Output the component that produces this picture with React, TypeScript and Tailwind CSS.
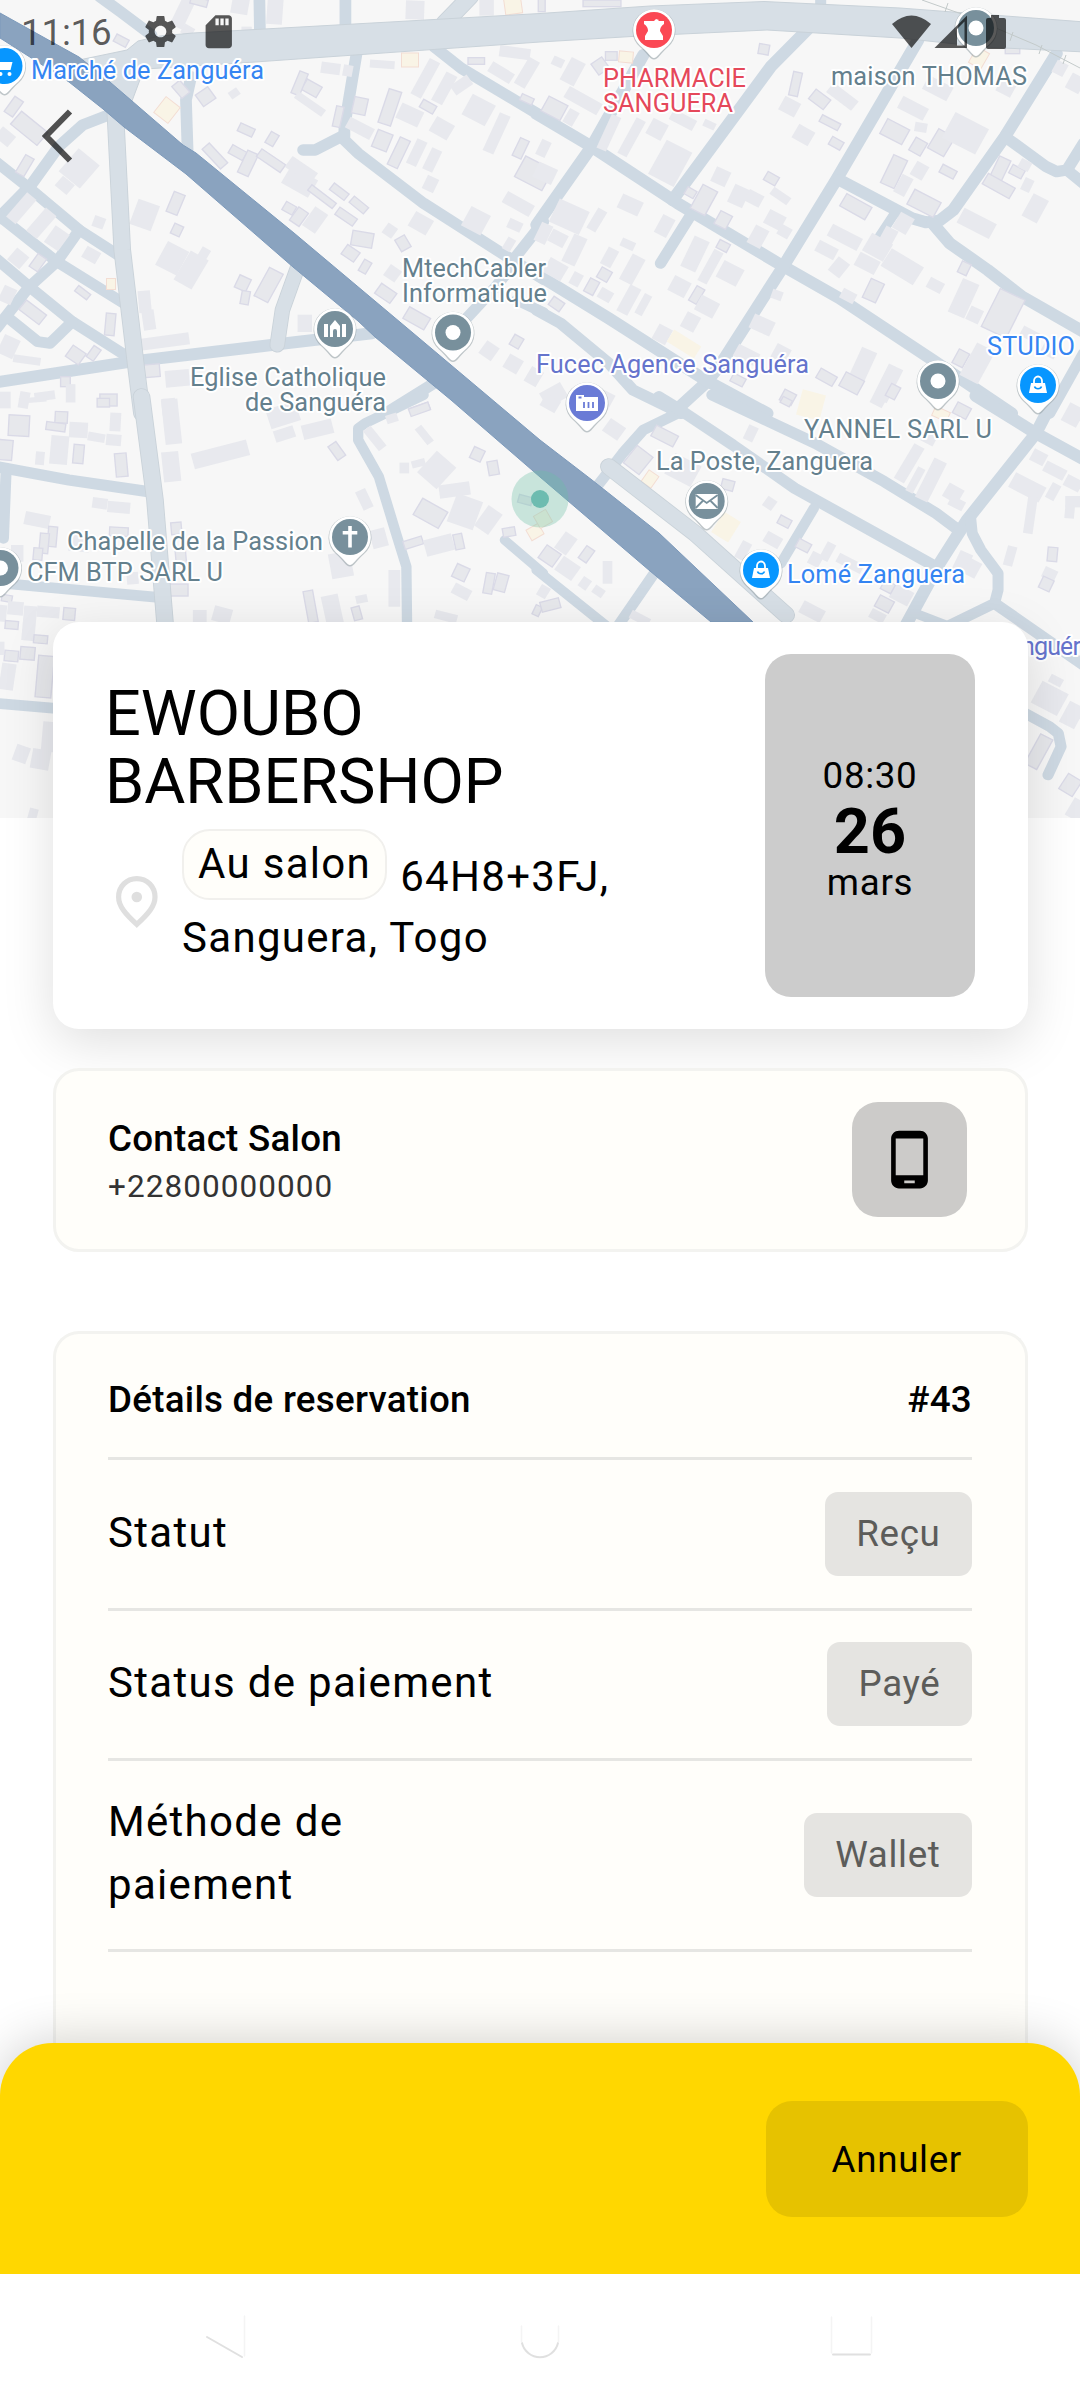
import React from 'react';
import { MdPhoneAndroid, MdSdCard, MdSettings } from 'react-icons/md';

type Road = [points: string, width?: number, major?: boolean];
/** centre x, centre y, width, height, rotation, outlined */
type Building = [number, number, number, number, number, number?];

interface Tile {
  transform: string;
  roads: Road[];
  buildings: Building[];
}

/* The map is cut in four tiles, each with its own local grid. */
const TILES: Tile[] = [
  {
    transform: 'scale(0.34439 0.33333)',
    roads: [
      ['290,-10 350,35 440,105', 32],
      ['753,-10 755,110', 32],
      ['1003,-10 1003,90', 32],
      ['1365,-10 1290,70', 46, true],
      ['555,230 540,300 545,460', 32],
      ['1037,150 1000,380 1000,420 1040,460 1230,610 1480,775 1578,838', 32],
      ['1000,405 915,450 880,450', 32],
      ['1260,140 1340,205 1578,352', 32],
      ['1578,665 1490,780'],
      ['335,340 355,750 395,1100 412,1240', 46, true],
      ['315,345 240,375 170,440 90,555 -10,660', 32],
      ['-10,487 80,560 230,690 350,770'],
      ['-10,642 165,785 360,910'],
      ['-10,777 85,860 210,965 370,1070'],
      ['230,690 165,785 85,860 -10,985'],
      ['20,950 110,1025 145,1030 210,965'],
      ['-10,1147 380,1085 830,1030 1080,1000', 34],
      ['865,800 820,930 805,1035', 40, true],
      ['1260,1150 1120,1240', 32],
      ['1350,960 1440,860 1500,780'],
      ['1500,900 1578,938', 30],
    ],
    buildings: [
      [40, 320, 30, 55, 35, 1], [85, 385, 100, 50, 40, 1], [15, 410, 50, 40, 40], [230, 505, 80, 90, 40], [72, 497, 28, 60, 30, 1],
      [188, 556, 45, 38, 40], [62, 625, 36, 95, 40], [120, 670, 40, 90, 40], [165, 715, 50, 60, 35], [287, 667, 34, 34, 20],
      [53, 775, 46, 46, 40], [110, 788, 30, 46, 35, 1], [265, 765, 46, 38, 30], [240, 878, 44, 20, 38, 1], [22, 885, 40, 50, 25],
      [95, 937, 74, 36, 38, 1], [320, 973, 28, 66, 5, 1], [420, 905, 36, 66, -5], [432, 960, 36, 60, -8], [475, 1025, 150, 36, -8],
      [25, 1040, 50, 60, 25], [78, 1080, 80, 24, 8], [220, 1065, 46, 40, 35, 1], [272, 1060, 25, 40, 35, 1], [440, 1112, 48, 38, -5, 1],
      [515, 1135, 70, 50, -5], [190, 1145, 28, 30, 0, 1], [205, 1180, 28, 55, 0], [130, 1188, 60, 26, -8], [315, 1200, 50, 36, 0, 1],
      [15, 1200, 32, 50, 0], [70, 1200, 30, 50, 10], [490, 1220, 40, 50, -5], [420, 645, 66, 80, 20], [510, 610, 34, 64, 22, 1],
      [514, 690, 28, 32, 25, 1], [500, 775, 70, 80, 28], [555, 810, 60, 100, 30], [590, 765, 28, 44, 30], [705, 850, 36, 40, 25, 1],
      [712, 893, 24, 40, 10, 1], [780, 855, 45, 96, 28, 1], [885, 970, 42, 52, 0], [715, 390, 46, 26, 25, 1], [790, 417, 26, 38, 30, 1],
      [624, 468, 28, 80, -42, 1], [690, 458, 48, 28, 30, 1], [720, 490, 34, 72, 25, 1], [787, 482, 84, 28, 35, 1], [870, 545, 90, 60, 30],
      [875, 510, 90, 40, 35], [935, 590, 90, 20, 38, 1], [985, 575, 54, 24, 38, 1], [1042, 615, 54, 24, 40, 1], [840, 625, 34, 28, 30, 1],
      [868, 650, 34, 48, 35, 1], [915, 660, 46, 68, 35], [1005, 650, 62, 26, 35, 1], [1052, 718, 62, 44, 10, 1], [1018, 760, 44, 34, 35, 1],
      [1060, 800, 24, 38, 30, 1], [1132, 692, 34, 36, 35], [1170, 730, 32, 40, -30, 1], [1222, 670, 60, 50, 30], [1140, 820, 40, 40, 35],
      [1120, 880, 54, 36, 35, 1], [1210, 955, 70, 40, 30, 1], [1382, 662, 64, 66, 28], [1505, 612, 90, 38, 30], [1495, 676, 42, 30, 25],
      [1478, 733, 26, 40, 30], [1390, 330, 76, 70, 28], [1283, 385, 60, 50, 30], [1132, 322, 38, 106, 18, 1], [1190, 345, 70, 50, 25],
      [1243, 320, 44, 26, 30, 1], [1235, 235, 34, 120, 28], [1290, 265, 36, 96, 28], [1340, 255, 60, 34, -35], [1045, 318, 40, 50, 12, 1],
      [982, 350, 22, 62, 12, 1], [1045, 385, 80, 36, 28], [1110, 422, 46, 54, 22, 1], [1158, 458, 32, 90, 25, 1], [1210, 458, 32, 80, 25],
      [1255, 480, 32, 70, 25], [1250, 552, 36, 44, 25], [1442, 400, 34, 124, 24], [1512, 445, 28, 58, 25, 1], [1550, 520, 90, 70, 28, 1],
      [1530, 298, 38, 20, 25, 1], [1110, 193, 72, 24, 4], [960, 205, 56, 34, 8], [1010, 212, 28, 34, 10], [1383, 183, 48, 20, 0, 1],
      [1455, 218, 74, 34, 32], [1530, 218, 36, 90, 30], [1495, 158, 90, 34, 8], [905, 265, 50, 36, 30, 1], [870, 250, 26, 70, 22, 1],
      [900, 312, 98, 24, 36], [680, 280, 30, 24, -35], [525, 268, 30, 46, -40, 1], [597, 290, 44, 42, -35, 1], [352, 122, 40, 24, 28, 1],
      [530, 40, 40, 90, 25], [578, 5, 50, 22, 15, 1], [698, 12, 50, 60, 10], [798, 35, 46, 76, 4], [1205, 30, 54, 56, 2], [1413, 22, 42, 50, 0],
      [716, 96, 30, 32, 0], [545, 92, 34, 30, 30], [1420, 1052, 44, 46, 35], [1500, 1025, 30, 34, 30, 1], [1490, 1092, 46, 46, 30],
      [1550, 1130, 40, 50, 30], [1220, 1225, 54, 20, -20, 1],
    ],
  },
  {
    transform: 'translate(540 0) scale(0.34439 0.33333)',
    roads: [
      ['815,-20 815,20', 30],
      ['785,80 670,200 385,600', 34],
      ['300,165 150,440 -10,675', 34],
      ['-10,342 150,440 400,610 700,795 870,895 1140,1080 1370,1240', 34],
      ['435,650 350,790'],
      ['1098,120 860,540 700,810 520,1100 480,1150 385,1240', 34],
      ['870,540 1080,655 1120,667 1160,662 1200,630 1350,410 1500,160', 34],
      ['1140,670 1190,730 1300,810 1400,890 1578,995', 34],
      ['1350,410 1470,500 1500,515 1530,510 1578,430', 32],
      ['1530,510 1578,550', 32],
      ['1030,640 985,710', 26],
      ['-10,822 200,955 480,1140 660,1240', 34],
      ['-10,930 60,970 200,1090 270,1170 410,1240', 32],
      ['1578,1060 1480,1240', 30],
    ],
    buildings: [
      [5, 15, 20, 40, 0, 1], [180, 10, 110, 20, 0, 1], [207, 168, 34, 26, 0, 1], [175, 198, 38, 40, -35, 1], [95, 215, 46, 76, 28],
      [52, 186, 34, 28, 25], [125, 302, 110, 38, 30], [42, 325, 62, 50, 28, 1], [90, 352, 32, 46, 30], [200, 398, 30, 110, 24],
      [266, 412, 30, 120, 28], [340, 388, 50, 52, 28], [415, 360, 76, 34, 28], [492, 374, 36, 22, 25], [378, 490, 84, 116, 28],
      [10, 445, 30, 50, 25], [15, 520, 60, 50, 25], [85, 650, 96, 76, 25], [165, 660, 30, 70, 30], [262, 615, 66, 46, 25],
      [362, 678, 40, 60, 28], [52, 715, 50, 40, 28], [100, 750, 42, 90, 25], [10, 700, 36, 60, 25], [202, 772, 34, 56, 28], [255, 733, 42, 26, 25],
      [268, 808, 42, 86, 28], [187, 824, 34, 34, 30, 1], [150, 860, 30, 44, 28, 1], [45, 808, 60, 50, 30], [105, 838, 30, 40, 28],
      [190, 885, 40, 34, 30], [258, 900, 36, 88, 28], [300, 914, 24, 66, 28], [48, 912, 38, 30, 35, 1], [405, 860, 54, 50, 28],
      [455, 885, 26, 50, 30, 1], [485, 920, 60, 50, 28], [437, 966, 44, 50, 28], [355, 1003, 44, 50, 28], [450, 762, 48, 100, 25],
      [495, 800, 30, 106, 28], [552, 820, 66, 56, 28], [532, 738, 34, 26, 28, 1], [532, 660, 38, 44, 28, 1], [476, 600, 48, 80, 28, 1],
      [437, 578, 24, 30, -60, 1], [525, 530, 46, 48, 25], [577, 588, 48, 58, 25], [622, 595, 48, 38, 28], [698, 588, 60, 26, 35],
      [672, 536, 38, 28, 30, 1], [633, 710, 44, 60, 28], [682, 660, 54, 46, 28], [710, 695, 36, 34, 30], [650, 148, 30, 30, 10, 1],
      [742, 252, 26, 72, 12, 1], [725, 320, 52, 46, 28], [812, 298, 54, 36, 38, 1], [878, 290, 92, 36, 38], [842, 368, 60, 22, 28, 1],
      [765, 405, 54, 46, 30], [860, 430, 38, 26, 30, 1], [1030, 395, 72, 50, 28, 1], [1083, 325, 84, 40, 28], [1106, 382, 36, 28, 10],
      [1098, 440, 38, 44, 30, 1], [1165, 428, 54, 66, 30, 1], [1235, 400, 110, 86, 28], [1028, 515, 44, 92, 25, 1], [1102, 512, 40, 46, 30],
      [1055, 556, 36, 60, 28], [1185, 515, 46, 26, 28, 1], [1115, 610, 86, 50, 28, 1], [917, 620, 84, 42, 30, 1], [885, 712, 98, 40, 28],
      [1055, 670, 46, 54, 30], [1012, 708, 40, 50, 28], [832, 750, 62, 36, 28], [868, 802, 42, 52, 38], [950, 790, 66, 44, 28],
      [980, 742, 70, 60, 30], [1052, 800, 110, 62, 32], [1148, 856, 46, 34, 28], [968, 872, 42, 62, 25, 1], [895, 888, 44, 32, 28],
      [688, 885, 32, 28, 20], [645, 975, 66, 46, 25], [1335, 510, 36, 76, 25, 1], [1332, 558, 90, 36, 30, 1], [1385, 515, 40, 28, 28, 1],
      [1408, 495, 34, 30, 28], [1415, 555, 28, 40, 25], [1438, 625, 50, 76, 28], [1268, 670, 106, 50, 28], [1232, 805, 28, 36, 25, 1],
      [1230, 895, 52, 110, 24], [1262, 945, 40, 44, 25], [1345, 940, 80, 126, 26, 1], [1222, 1075, 34, 46, 28, 1], [1270, 1090, 60, 110, 28],
      [1425, 1005, 60, 32, 28], [1480, 1050, 46, 40, 28], [935, 1100, 48, 110, 24], [905, 1150, 60, 46, 28, 1], [1010, 1150, 46, 110, 26],
      [1025, 1175, 30, 40, 28, 1], [832, 1132, 54, 32, 30, 1], [720, 1192, 38, 36, 28, 1], [600, 1065, 70, 40, 28], [575, 1140, 40, 26, 28, 1],
      [700, 1060, 46, 46, 28], [1155, 265, 80, 46, 28], [1355, 260, 48, 50, 28], [1372, 150, 42, 22, 0, 1], [1510, 205, 36, 40, 28],
      [1555, 250, 44, 50, 28], [40, 1185, 70, 50, -30], [190, 1200, 40, 50, 28],
    ],
  },
  {
    transform: 'translate(0 400) scale(0.34439 0.33333)',
    roads: [
      ['-10,200 200,240 430,275', 32],
      ['18,205 10,415', 30],
      ['411,-10 450,300 480,680', 46, true],
      ['30,552 460,592', 30],
      ['1230,-15 1060,70 1040,85 1040,120 1100,230 1150,400 1180,500 1182,680', 28],
      ['1465,420 1578,520', 26],
      ['-10,910 170,926', 30],
    ],
    buildings: [
      [95, 0, 80, 16, -5], [300, 8, 36, 26, 0, 1], [498, 65, 48, 135, -6], [497, 200, 50, 90, -6], [640, 163, 166, 48, -15],
      [822, 45, 90, 60, -18], [826, 102, 60, 36, -18], [922, 88, 90, 44, -14], [978, 153, 28, 50, -35, 1], [1088, 115, 28, 76, -38],
      [1138, 55, 34, 26, -18], [1218, 28, 60, 24, -20, 1], [1232, 105, 24, 60, -38], [1386, 163, 34, 36, 25, 1], [1432, 204, 30, 42, -10, 1],
      [1174, 204, 28, 32, 0], [1215, 190, 40, 22, -15], [1268, 210, 76, 86, 42], [1320, 270, 90, 40, -8], [1250, 340, 84, 56, 30, 1],
      [1350, 335, 80, 90, 20], [1418, 360, 50, 74, 35], [1058, 298, 32, 60, -25], [1100, 415, 46, 56, -15], [1200, 428, 56, 24, -18, 1],
      [1275, 435, 84, 50, -15], [1332, 425, 26, 46, -12, 1], [990, 495, 64, 76, -10], [1145, 565, 34, 110, 0], [1338, 518, 40, 42, 25, 1],
      [1340, 575, 54, 34, 28], [1420, 550, 26, 62, 10, 1], [1455, 548, 34, 52, 15, 1], [902, 620, 28, 96, -10, 1], [965, 630, 50, 90, -12],
      [1036, 640, 24, 40, -15, 1], [1050, 597, 34, 24, -12], [1295, 650, 66, 26, 15], [1560, 632, 20, 30, 25, 1], [1478, 396, 36, 26, -10, 1],
      [1525, 300, 40, 24, 15, 1], [55, 77, 60, 62, 3, 1], [178, 52, 36, 34, 3, 1], [162, 80, 56, 24, 8, 1], [228, 90, 54, 46, 3],
      [172, 150, 52, 86, 5], [228, 162, 30, 56, 5, 1], [335, 66, 32, 56, 3], [280, 112, 50, 26, 10], [330, 120, 44, 34, 5],
      [352, 195, 34, 70, -5, 1], [15, 150, 42, 60, 5, 1], [116, 175, 26, 40, 5], [290, 310, 44, 32, 8], [345, 322, 66, 34, 5],
      [108, 360, 74, 40, 12], [152, 410, 26, 60, 5, 1], [128, 430, 26, 60, 5, 1], [345, 395, 54, 26, 3, 1], [512, 385, 30, 36, -5, 1],
      [515, 570, 62, 36, 0, 1], [525, 470, 30, 50, -5, 1], [50, 460, 36, 50, 0], [230, 430, 60, 50, 5], [385, 535, 34, 36, -5],
      [20, 595, 30, 20, 10, 1], [45, 625, 46, 40, 5], [85, 670, 38, 104, 5], [140, 636, 66, 34, 5], [201, 642, 34, 36, 5, 1],
      [5, 640, 28, 50, 5], [34, 675, 38, 24, 5, 1], [118, 718, 40, 24, 5, 1], [80, 760, 42, 38, 5, 1], [33, 768, 40, 32, 5, 1],
      [130, 830, 46, 125, 5, 1], [22, 830, 42, 80, 8], [5, 745, 16, 40, 0], [62, 1062, 42, 50, 20], [118, 1078, 54, 60, 10],
      [140, 1010, 36, 90, 5], [95, 1245, 26, 40, 15], [580, 650, 40, 40, 0], [645, 645, 54, 46, 15], [110, 462, 26, 36, 5, 1],
    ],
  },
  {
    transform: 'translate(540 400) scale(0.34439 0.33333)',
    roads: [
      ['-10,510 195,680', 28],
      ['335,515 225,680', 30],
      ['400,40 300,90 240,160 165,260', 30],
      ['345,-10 400,25 560,135 740,265 1010,420 1140,495', 32],
      ['500,-15 800,130 1000,245 1150,340 1215,390', 32],
      ['1265,-12 1440,100 1578,178', 34],
      ['1495,-10 1440,100 1240,360 1160,490 1060,680', 34],
      ['1250,350 1255,400 1280,450 1330,520 1330,570 1320,610 1180,680', 30],
      ['1320,610 1578,795', 32],
      ['1090,640 1190,680', 26],
      ['795,325 700,490', 28],
      ['200,200 450,400 715,645', 46, true],
      ['1400,935 1480,980 1505,1000 1513,1040 1475,1125', 30],
    ],
    buildings: [
      [215, 88, 54, 46, 35], [362, 108, 72, 36, 28, 1], [285, 180, 58, 66, 38, 1], [415, 210, 86, 70, 28], [545, 255, 36, 30, 15, 1],
      [612, 100, 30, 46, 25], [667, 310, 32, 34, 35], [710, 365, 36, 26, 28, 1], [676, 420, 50, 36, 30], [765, 437, 40, 28, 28, 1],
      [590, 452, 30, 56, 28], [835, 455, 28, 56, 28], [800, 478, 36, 40, 28], [75, 430, 42, 60, 35], [135, 463, 28, 44, 35, 1],
      [28, 468, 50, 46, 35, 1], [80, 505, 60, 50, 35], [130, 550, 28, 34, 35], [170, 574, 34, 26, 35], [196, 517, 28, 68, 0],
      [30, 615, 56, 30, -15, 1], [10, 575, 30, 36, 30], [290, 655, 60, 26, 28], [790, 635, 70, 40, 28], [1000, 612, 46, 38, 28, 1],
      [980, 648, 46, 30, 28], [1072, 190, 34, 120, 30], [1135, 240, 40, 130, 26], [1090, 240, 24, 80, 28], [1200, 280, 50, 46, 30],
      [1210, 310, 46, 30, 28], [1225, 490, 40, 70, 25], [1255, 505, 40, 50, 28], [1448, 172, 44, 38, 28], [1495, 212, 66, 34, 28],
      [1548, 250, 50, 36, 28], [1415, 262, 100, 50, 28], [1424, 345, 28, 112, 8], [1490, 275, 28, 50, 28], [1550, 305, 50, 34, 0],
      [1538, 335, 28, 40, 5], [1365, 468, 28, 60, 15], [1488, 463, 28, 42, 5, 1], [1480, 522, 40, 34, 25], [1470, 552, 34, 36, 25, 1],
      [1225, 32, 44, 36, 28, 1], [1548, 45, 50, 60, 28], [1480, 895, 86, 74, 28], [1498, 842, 40, 26, 28], [1545, 945, 50, 70, 28],
      [1448, 1055, 40, 100, 28, 1], [1540, 1155, 46, 54, 32, 1], [1560, 1230, 50, 60, 30], [980, 5, 40, 24, 28], [715, 5, 30, 20, 28, 1],
      [1130, 115, 40, 34, 28], [30, 10, 50, 40, 30], [1050, 585, 60, 46, 28], [1010, 560, 34, 30, 28, 1], [900, 490, 80, 30, 28],
    ],
  },
];

/* Pale yellow plots, in map pixels. */
const PLOTS: [number, number, number, number, number][] = [
  [513, 5, 17, 18, -8], [410, 60, 17, 14, 0], [167, 110, 18, 20, 38], [111, 284, 9, 11, 0], [626, 57, 14, 11, 5],
  [684, 344, 32, 14, 32], [811, 405, 24, 26, 15], [979, 58, 14, 18, 30], [726, 527, 20, 24, 32], [650, 479, 12, 14, 35],
  [941, 414, 16, 10, 25], [535, 532, 14, 12, -30], [543, 519, 14, 14, -30],
];

type Glyph = 'dot' | 'cart' | 'bag' | 'bank' | 'mail' | 'cross' | 'church' | 'mortar';
const PINS: { x: number; y: number; color: string; glyph: Glyph }[] = [
  { x: 4.5, y: 66, color: '#0796ff', glyph: 'cart' },
  { x: 654, y: 30, color: '#fb4854', glyph: 'mortar' },
  { x: 976, y: 28, color: '#78909c', glyph: 'dot' },
  { x: 335, y: 329, color: '#78909c', glyph: 'church' },
  { x: 453, y: 332.5, color: '#78909c', glyph: 'dot' },
  { x: 587, y: 403, color: '#6a7bd6', glyph: 'bank' },
  { x: 938, y: 381, color: '#78909c', glyph: 'dot' },
  { x: 1038, y: 385, color: '#0796ff', glyph: 'bag' },
  { x: 706.7, y: 501, color: '#78909c', glyph: 'mail' },
  { x: 761, y: 570, color: '#0796ff', glyph: 'bag' },
  { x: 350, y: 537, color: '#78909c', glyph: 'cross' },
  { x: 0.5, y: 568, color: '#78909c', glyph: 'dot' },
];

const SLATE = '#64808d';
const BLUE = '#3585f2';
const LABELS: { x: number; y: number; w: number; t: string; color: string }[] = [
  { x: 31, y: 79, w: 233, t: 'Marché de Zanguéra', color: BLUE },
  { x: 603, y: 86.5, w: 143, t: 'PHARMACIE', color: '#e5485a' },
  { x: 603, y: 112, w: 130, t: 'SANGUERA', color: '#e5485a' },
  { x: 831, y: 84.5, w: 196, t: 'maison THOMAS', color: SLATE },
  { x: 402, y: 276.5, w: 144, t: 'MtechCabler', color: SLATE },
  { x: 402, y: 302, w: 145, t: 'Informatique', color: SLATE },
  { x: 190, y: 385.5, w: 196, t: 'Eglise Catholique', color: SLATE },
  { x: 245, y: 410.5, w: 141, t: 'de Sanguéra', color: SLATE },
  { x: 536, y: 372.5, w: 273, t: 'Fucec Agence Sanguéra', color: '#6574cc' },
  { x: 987, y: 354.5, w: 88, t: 'STUDIO', color: BLUE },
  { x: 804, y: 437.5, w: 188, t: 'YANNEL SARL U', color: SLATE },
  { x: 656, y: 470, w: 217, t: 'La Poste, Zanguera', color: SLATE },
  { x: 787, y: 582.5, w: 178, t: 'Lomé Zanguera', color: BLUE },
  { x: 67, y: 550, w: 256, t: 'Chapelle de la Passion', color: SLATE },
  { x: 27, y: 580.5, w: 196, t: 'CFM BTP SARL U', color: SLATE },
  { x: 1021, y: 655, w: 60, t: 'nguér', color: '#6574cc' },
];

function PinGlyph({ kind, color }: { kind: Glyph; color: string }) {
  switch (kind) {
    case 'dot':
      return <circle r="7.5" fill="#fff" />;
    case 'cart':
      return (
        <g fill="#fff">
          <path d="M-12 -7h4l1 3h15l-2 8h-12l-3 -9h-3z" />
          <circle cx="-4" cy="8" r="2" />
          <circle cx="5" cy="8" r="2" />
        </g>
      );
    case 'mortar':
      return <path fill="#fff" d="M-10 -9h10l2-2 3 1-1 1h6v3c-3 2-4 4-4 7l3 5v4h-18v-4l3-5c0-3-1-5-4-7z" />;
    case 'church':
      return (
        <g fill="#fff">
          <path d="M-11 -5h4v13h-4zM7 -5h4v13h-4z" />
          <path d="M-5 8v-11l5-6 5 6v11h-3v-6a2 2 0 0 0-4 0v6z" />
        </g>
      );
    case 'bank':
      return (
        <g>
          <path fill="#fff" d="M-11 -8h8v2h14v14h-22z" />
          <path stroke={color} strokeWidth="1.8" d="M-8.500 -5.500h3M-3 -1v6M1.500 -1v6M6 -1v6" />
        </g>
      );
    case 'mail':
      return (
        <g>
          <path fill="#fff" d="M-11 -7h22v15h-22z" />
          <path fill="none" stroke={color} strokeWidth="1.8" d="M-11 -6l11 8 11-8M-11 7l7-7M11 7l-7-7" />
        </g>
      );
    case 'cross':
      return <path fill="#fff" d="M-1.800 -11h3.600v5h5.500v3.500h-5.500v13h-3.600v-13h-5.500v-3.500h5.500z" />;
    case 'bag':
      return (
        <g>
          <path fill="#fff" d="M-7 -2h14l2 10h-18z" />
          <path fill="none" stroke="#fff" strokeWidth="1.800" d="M-4 -1v-3a4 4.500 0 0 1 8 0v3" />
          <path fill="none" stroke={color} strokeWidth="1.600" d="M-3.500 1.500c1 3 6 3 7 0" />
        </g>
      );
  }
}

function CityMap() {
  return (
    <svg className="absolute inset-0 h-full w-full" viewBox="0 0 1080 818" aria-hidden="true">
      <rect width="1080" height="818" fill="#f7f7f7" />
      {TILES.map((t) => (
        <g key={t.transform} transform={t.transform} fill="none" strokeLinecap="round" strokeLinejoin="round">
          {t.roads.filter((r) => !r[2]).map(([pts, w]) => (
            <polyline key={pts} points={pts} stroke="#ced9e3" strokeWidth={(w ?? 31) + 2} />
          ))}
        </g>
      ))}
      {TILES.map((t) => (
        <g key={t.transform} transform={t.transform}>
          {t.buildings.map(([x, y, w, h, a, o], i) => (
            <rect
              key={i}
              x={-w / 2}
              y={-h / 2}
              width={w}
              height={h}
              transform={`translate(${x} ${y}) rotate(${a})`}
              fill={o ? '#e7e8ec' : '#e8e9ee'}
              stroke={o ? '#dadae7' : 'none'}
              strokeWidth="4"
            />
          ))}
        </g>
      ))}
      {PLOTS.map(([x, y, w, h, a], i) => (
        <rect key={i} x={-w / 2} y={-h / 2} width={w} height={h} transform={`translate(${x} ${y}) rotate(${a})`} fill="#f9f4e6" stroke={w < 19 ? '#f3ddd3' : 'none'} strokeWidth="1" />
      ))}
      {TILES.map((t) => (
        <g key={t.transform} transform={t.transform} fill="none" strokeLinecap="round" strokeLinejoin="round">
          {t.roads.filter((r) => r[2]).map(([pts, w]) => (
            <React.Fragment key={pts}>
              <polyline points={pts} stroke="#c9d2d9" strokeWidth={(w ?? 40) + 5} />
              <polyline points={pts} stroke="#d7dfe6" strokeWidth={w} />
            </React.Fragment>
          ))}
        </g>
      ))}
      <path
        d="M79 60 127 50 138 41 160 36 193 33 390 22 540 13.500 650 6 764 1.500 900 8 1085 22V52L984 47 900 38 767 30 640 36 540 42 255 62 145 69 141 77 132 101Z"
        fill="#d7dfe6"
        stroke="#c9d2d9"
        strokeWidth="1"
      />
      <path d="M922 0 970 17 1036 45 1080 68M948 3l-3 9M1013 32l-3 9M1042 45l-3 9M1066 55l-3 9" fill="none" stroke="#c3caca" strokeWidth="1" />
      <path
        d="M0 13 79 57 103 76 132 101 183 145 196 153 294 233 413 333 540 440 592 480 659 533 753 622H711L650 571 540 477 451 400 375 337 358 321 293 267 186 174 124 127 103 109 69 82 0 38Z"
        fill="#8aa3bf"
        stroke="#7d9abb"
        strokeWidth="1"
      />
      <circle cx="540" cy="499" r="28.500" fill="#69bfa5" fillOpacity=".33" />
      <circle cx="540" cy="499" r="9" fill="#6dbcb0" />
      {PINS.map((p) => (
        <g key={`${p.x}`} transform={`translate(${p.x} ${p.y})`}>
          <path d="M0 29.500C-4 29.500 -7 23 -14 17A21.500 21.500 0 1 1 14 17C7 23 4 29.500 0 29.500Z" fill="#9aa5aa" fillOpacity=".6" />
          <path d="M0 28C-3 28 -6 22 -14 15.500A20.800 20.800 0 1 1 14 15.500C6 22 3 28 0 28Z" fill="#fff" />
          <circle r="18" fill={p.color} />
          <PinGlyph kind={p.glyph} color={p.color} />
        </g>
      ))}
      <g fontFamily="Roboto, sans-serif" fontSize="25.300" fontWeight="450" stroke="#fff" strokeWidth="4" strokeLinejoin="round" paintOrder="stroke">
        {LABELS.map((l) => (
          <text key={l.t} x={l.x} y={l.y} textLength={l.w} fill={l.color}>
            {l.t}
          </text>
        ))}
      </g>
    </svg>
  );
}

function StatusBar() {
  return (
    <div className="relative flex h-[63px] items-center justify-between pr-[73px] pl-[21px]">
      <div className="flex items-center">
        <span className="pt-[2px] text-[36.750px] leading-[63px] tracking-[-0.2px] text-black/65">11:16</span>
        <MdSettings className="ml-[29px] size-[39px] text-black/65" />
        <MdSdCard className="ml-[19.500px] size-[39.500px] text-black/65" />
      </div>
      <svg className="h-[34px] w-[115px]" viewBox="0 0 115 34" fill="#000" fillOpacity=".65">
        <path d="M0 9Q19.500 -8 39 9L19.500 33Z" />
        <path fillRule="evenodd" d="M42.500 33 75 .5V33ZM65 14V30.500H72.500V6.500Z" />
        <path d="M99 0h8v3h5q2 0 2 2v27q0 2-2 2h-16q-2 0-2-2V5q0-2 2-2h3z" />
      </svg>
    </div>
  );
}

function SalonCard() {
  return (
    <section className="relative flex h-[406.500px] justify-between rounded-[26px] bg-white px-[52.500px] py-[31.500px] shadow-[0_13px_52px_rgba(0,0,0,0.13)]">
      <div className="w-[560px] pt-[26px]">
        <h1 className="text-[63px] leading-[68px]">
          EWOUBO
          <br />
          BARBERSHOP
        </h1>
        <div className="mt-[13.500px] flex items-center">
          <svg className="mt-[5px] ml-[10.500px] h-[52px] w-[42px]" viewBox="0 0 42 52">
            <path
              d="M20.800 48.400C9 37.500 2.600 30 2.600 21C2.600 10.500 10.500 2.600 20.800 2.600S39 10.500 39 21C39 30 32.600 37.500 20.800 48.400Z"
              fill="none"
              stroke="#dfdfdf"
              strokeWidth="5.200"
            />
            <circle cx="20.800" cy="21" r="5.300" fill="#dfdfdf" />
          </svg>
          <div className="ml-[24.500px] text-[42px] tracking-[1.3125px]">
            <div className="flex items-start">
              <span className="rounded-[28px] border-[2.600px] border-[#f1f0ed] bg-[#fffefa] px-[14px] pt-[2px] pb-[3px] leading-[62px]">
                Au salon
              </span>
              <span className="ml-[13px] pt-[16px] leading-[63px]">64H8+3FJ,</span>
            </div>
            <p className="mt-[-2px] leading-[63px]">Sanguera, Togo</p>
          </div>
        </div>
      </div>
      <div className="flex w-[210px] flex-col items-center justify-center rounded-[26px] bg-[#ccc] pt-[4px]">
        <span className="text-[36.750px] leading-[52px] tracking-[0.656px]">08:30</span>
        <span className="text-[63px] leading-[60px] font-bold">26</span>
        <span className="text-[36.750px] leading-[42px] tracking-[0.656px]">mars</span>
      </div>
    </section>
  );
}

function ContactCard() {
  return (
    <section className="relative mt-[39px] flex h-[184px] items-center justify-between rounded-[26px] border-[3px] border-[#f3f3f0] bg-[#fffefa] pr-[57.500px] pl-[52.500px]">
      <div className="flex flex-col pt-[2px]">
        <span className="text-[36.750px] leading-[52.500px] font-medium tracking-[0.2625px]">Contact Salon</span>
        <span className="text-[31.500px] leading-[42px] tracking-[1.050px] text-[#333]">+22800000000</span>
      </div>
      <button className="flex size-[115.500px] items-center justify-center rounded-[26px] bg-[#cccbc9]">
        <MdPhoneAndroid className="size-[63px] text-black" />
      </button>
    </section>
  );
}

const ROWS = [
  { label: 'Statut', value: 'Reçu', box: 'h-[151px]' },
  { label: 'Status de paiement', value: 'Payé', box: 'h-[149.500px]' },
  { label: 'Méthode de paiement', value: 'Wallet', box: 'h-[191.500px]' },
];

function DetailsCard() {
  return (
    <section className="mt-[79px] flex-1 rounded-t-[26px] border-[3px] border-b-0 border-[#f3f3f0] bg-[#fffefa] px-[52.500px]">
      <header className="flex h-[126.500px] items-center justify-between border-b-[3px] border-[#e6e6e3] pt-[8px] text-[36.750px] font-medium tracking-[0.2625px]">
        <h2>Détails de reservation</h2>
        <span>#43</span>
      </header>
      {ROWS.map((r) => (
        <div key={r.label} className={`flex items-center justify-between border-b-[3px] border-[#e6e6e3] ${r.box}`}>
          <span className="max-w-[400px] pb-[3px] text-[42px] leading-[63px] tracking-[1.3125px]">{r.label}</span>
          <span className="rounded-[13px] bg-[#e5e4e1] px-[31.500px] text-[36.750px] leading-[84px] tracking-[0.656px] text-[#5c5c5a]">
            {r.value}
          </span>
        </div>
      ))}
    </section>
  );
}

function SystemNav() {
  return (
    <nav className="relative flex h-[126px] items-center bg-white pl-[204px]">
      <svg className="h-[54px] w-[680px]" viewBox="0 0 680 54" fill="none" strokeLinecap="round">
        <g stroke="#e0e0e0" strokeWidth="2">
          <path d="M3 27 38 47" />
          <path d="M318 33A18.500 18.500 0 0 0 354 33" />
          <path d="M629 44.500H666" />
        </g>
        <g stroke="#f4f4f4" strokeWidth="1.500">
          <path d="M40.500 6V46" />
          <path d="M317.500 16V32M354.500 16V32" />
          <path d="M627.500 7V43M667.500 7V43" />
        </g>
      </svg>
    </nav>
  );
}

export default function App() {
  return (
    <div className="flex h-[2400px] w-[1080px] flex-col overflow-hidden bg-white font-[Roboto,sans-serif] text-black">
      <div className="flex h-[2096px] shrink-0 flex-col">
        <header className="relative h-[818px] shrink-0 overflow-hidden">
          <CityMap />
          <StatusBar />
          <button className="relative mt-[46px] ml-[42px] block">
            <svg className="h-[54px] w-[32px]" viewBox="0 0 32 54">
              <path d="M28 2.500 4 27 28 51.500" fill="none" stroke="#000" strokeOpacity=".68" strokeWidth="6" />
            </svg>
          </button>
        </header>
        <main className="-mt-[196px] flex flex-1 flex-col px-[52.500px]">
          <SalonCard />
          <ContactCard />
          <DetailsCard />
        </main>
      </div>
      <footer className="relative -mt-[53px] flex h-[231px] shrink-0 items-center justify-end rounded-t-[52.500px] bg-[#ffd700] pr-[52.500px] shadow-[0_0_52px_rgba(0,0,0,0.2)]">
        <button className="rounded-[26px] bg-[#e6c200] px-[65.600px] pt-[1px] text-[36.750px] leading-[115px] tracking-[0.656px]">Annuler</button>
      </footer>
      <SystemNav />
    </div>
  );
}
